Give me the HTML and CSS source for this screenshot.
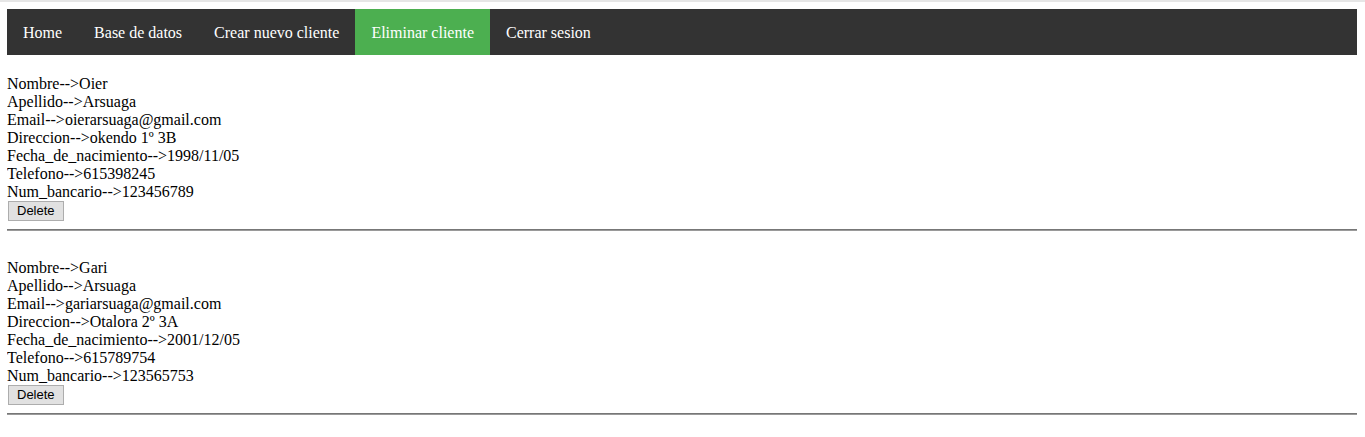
FILE: index.html
```html
<!DOCTYPE html>
<html lang="es">
<head>
<meta charset="utf-8">
<title>Eliminar cliente</title>
<link rel="stylesheet" href="styles.css">
</head>
<body>
<ul class="nav">
  <li><a href="#">Home</a></li>
  <li><a href="#">Base de datos</a></li>
  <li><a href="#">Crear nuevo cliente</a></li>
  <li><a class="active" href="#">Eliminar cliente</a></li>
  <li><a href="#">Cerrar sesion</a></li>
</ul>
<div class="record">
  <div>Nombre--&gt;Oier</div>
  <div>Apellido--&gt;Arsuaga</div>
  <div>Email--&gt;oierarsuaga@gmail.com</div>
  <div>Direccion--&gt;okendo 1º 3B</div>
  <div>Fecha_de_nacimiento--&gt;1998/11/05</div>
  <div>Telefono--&gt;615398245</div>
  <div>Num_bancario--&gt;123456789</div>
  <button class="btn" type="button">Delete</button>
  <hr class="sep">
</div>
<div class="record">
  <div>Nombre--&gt;Gari</div>
  <div>Apellido--&gt;Arsuaga</div>
  <div>Email--&gt;gariarsuaga@gmail.com</div>
  <div>Direccion--&gt;Otalora 2º 3A</div>
  <div>Fecha_de_nacimiento--&gt;2001/12/05</div>
  <div>Telefono--&gt;615789754</div>
  <div>Num_bancario--&gt;123565753</div>
  <button class="btn" type="button">Delete</button>
  <hr class="sep">
</div>
</body>
</html>
```
FILE: styles.css
```css
html {
  border-top: 2px solid #e6e6e6;
  background: #fff;
}
body {
  margin: 7px 8px 0 7px;
  font-family: "Liberation Serif", "Times New Roman", serif;
  font-size: 16px;
  line-height: 18px;
  color: #000;
}
.nav {
  list-style: none;
  margin: 0;
  padding: 0;
  display: flex;
  background: #333333;
}
.nav a {
  display: block;
  padding: 15px 16px 13px;
  color: #fff;
  text-decoration: none;
}
.nav a.active {
  background: #4caf50;
}
.record {
  padding-top: 20px;
}
.btn {
  display: block;
  margin: 0 0 0 1px;
  height: 20px;
  padding: 0 8px;
  font-family: "Liberation Sans", Arial, sans-serif;
  font-size: 13px;
  line-height: 16px;
  color: #000;
  background: #e1e1e1;
  border: 1px solid #adadad;
  border-radius: 0;
}
.sep {
  margin: 8px 0;
  border: 0;
  border-top: 1px solid #777;
  border-bottom: 1px solid #9a9a9a;
  height: 0;
}
```
